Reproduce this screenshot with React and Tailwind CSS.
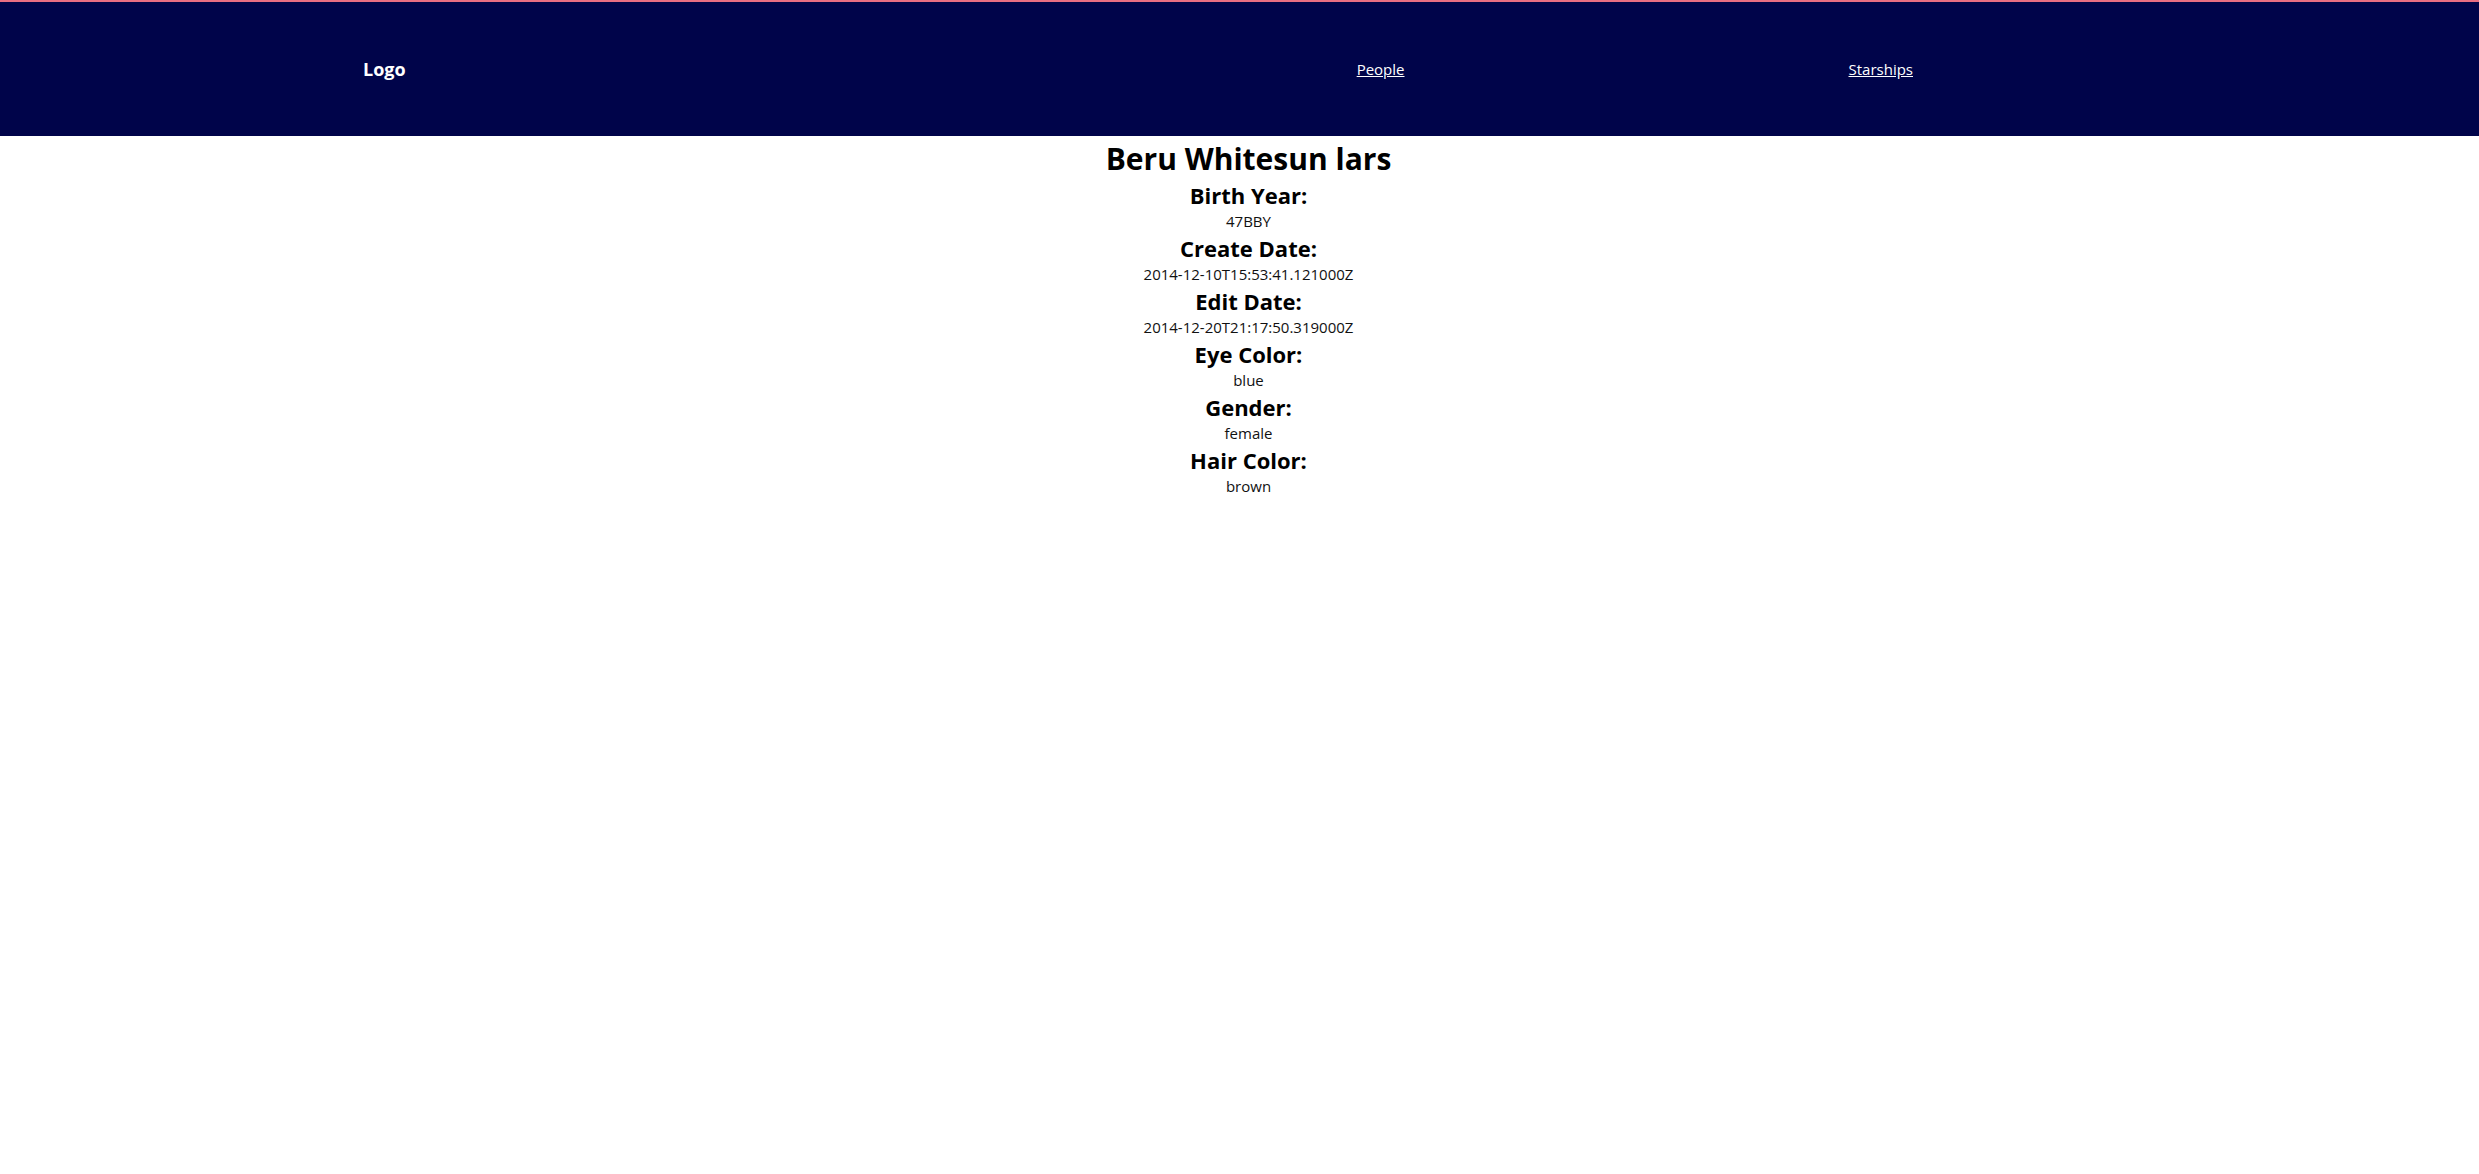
import React from 'react';

const person = {
  name: 'Beru Whitesun lars',
  fields: [
    { label: 'Birth Year:', value: '47BBY' },
    { label: 'Create Date:', value: '2014-12-10T15:53:41.121000Z' },
    { label: 'Edit Date:', value: '2014-12-20T21:17:50.319000Z' },
    { label: 'Eye Color:', value: 'blue' },
    { label: 'Gender:', value: 'female' },
    { label: 'Hair Color:', value: 'brown' },
  ],
};

function Header() {
  return (
    <header className="h-[136px] border-t-2 border-[#e96e82] bg-[#00044a] text-white flex items-center">
      <div className="ml-[363px] text-[18px] font-bold leading-none">Logo</div>
      <nav className="flex items-center ml-[951px] gap-[444px] text-[15px] leading-none">
        <a href="#" className="underline">People</a>
        <a href="#" className="underline">Starships</a>
      </nav>
    </header>
  );
}

export default function App() {
  return (
    <div className="min-h-screen bg-white text-black font-['Open_Sans',sans-serif]">
      <Header />

      {/* Detalhes da personagem */}
      <main className="pt-[5px] pl-[18px] flex flex-col items-center text-center">
        <h1 className="text-[30px] font-bold leading-[36px] mb-[4px]">{person.name}</h1>
        {person.fields.map((f) => (
          <div key={f.label} className="flex flex-col items-center">
            <h2 className="text-[22px] font-bold leading-[28px]">{f.label}</h2>
            <p className="text-[15px] leading-[25px] text-[#111]">{f.value}</p>
          </div>
        ))}
      </main>
    </div>
  );
}
